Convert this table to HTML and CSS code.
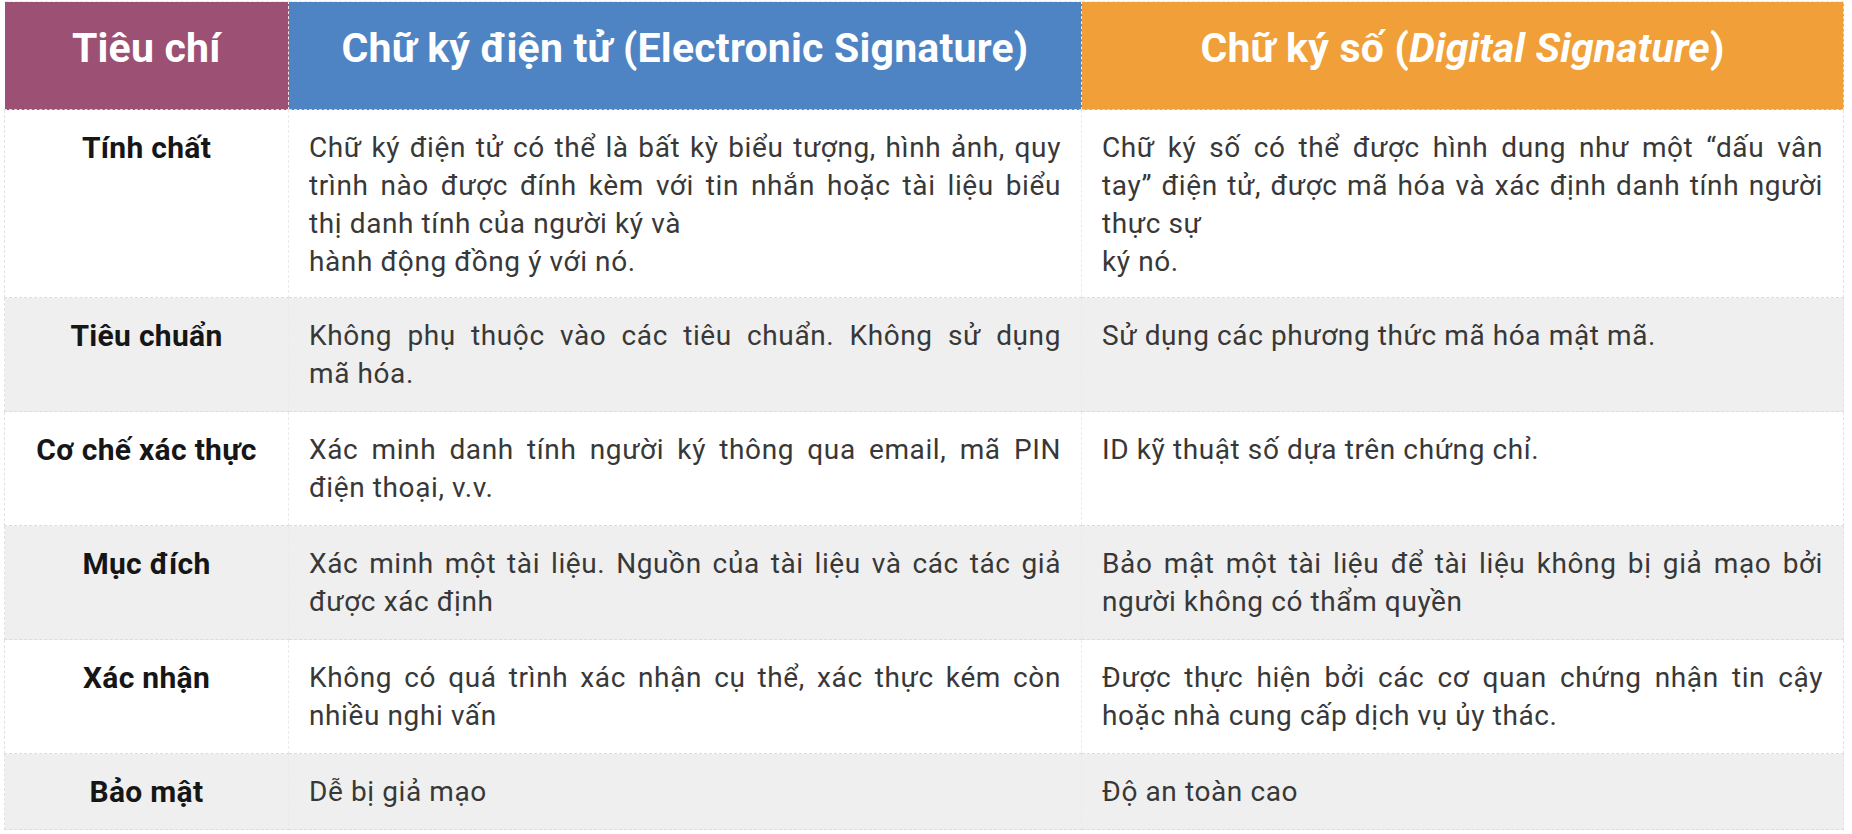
FILE: index.html
```html
<!DOCTYPE html>
<html lang="vi">
<head>
<meta charset="utf-8">
<title>Chữ ký điện tử và Chữ ký số</title>
<link rel="stylesheet" href="styles.css">
</head>
<body>
<table class="compare">
  <colgroup>
    <col class="c-crit">
    <col class="c-elec">
    <col class="c-dig">
  </colgroup>
  <thead>
    <tr>
      <th class="h-crit">Tiêu chí</th>
      <th class="h-elec">Chữ ký điện tử (Electronic Signature)</th>
      <th class="h-dig">Chữ ký số (<i>Digital Signature</i>)</th>
    </tr>
  </thead>
  <tbody>
    <tr class="row-a">
      <th>Tính chất</th>
      <td>Chữ ký điện tử có thể là bất kỳ biểu tượng, hình ảnh, quy trình nào được đính kèm với tin nhắn hoặc tài liệu biểu thị&nbsp;danh tính của người ký và<br>hành động đồng ý với nó.</td>
      <td>Chữ ký số có thể được hình dung như một “dấu vân tay”&nbsp;điện tử, được mã hóa và xác định danh tính người thực&nbsp;sự<br>ký nó.</td>
    </tr>
    <tr class="row-b">
      <th>Tiêu chuẩn</th>
      <td>Không phụ thuộc vào các tiêu chuẩn. Không sử dụng mã&nbsp;hóa.</td>
      <td>Sử dụng các phương thức mã hóa mật mã.</td>
    </tr>
    <tr class="row-a">
      <th>Cơ chế xác thực</th>
      <td>Xác minh danh tính người ký thông qua email, mã PIN điện thoại, v.v.</td>
      <td>ID kỹ thuật số dựa trên chứng chỉ.</td>
    </tr>
    <tr class="row-b">
      <th>Mục đích</th>
      <td>Xác minh một tài liệu. Nguồn của tài liệu và các tác giả được xác định</td>
      <td>Bảo mật một tài liệu để tài liệu không bị giả mạo bởi người không có thẩm quyền</td>
    </tr>
    <tr class="row-a">
      <th>Xác nhận</th>
      <td>Không có quá trình xác nhận cụ thể, xác thực kém còn nhiều nghi vấn</td>
      <td>Được thực hiện bởi các cơ quan chứng nhận tin cậy hoặc nhà cung cấp dịch vụ ủy thác.</td>
    </tr>
    <tr class="row-b">
      <th>Bảo mật</th>
      <td>Dễ bị giả mạo</td>
      <td>Độ an toàn cao</td>
    </tr>
  </tbody>
</table>
</body>
</html>
```
FILE: styles.css
```css
html, body {
  margin: 0;
  padding: 0;
  background: #ffffff;
}

body {
  padding: 1px 0 0 4px;
  font-family: Roboto, "Noto Sans", "Liberation Sans", sans-serif;
}

.compare {
  border-collapse: collapse;
  table-layout: fixed;
  width: 1839px;
}

.c-crit { width: 284px; }
.c-elec { width: 793px; }
.c-dig  { width: 762px; }

.compare thead th {
  height: 91px;
  padding: 0 10px 16px;
  color: #ffffff;
  font-size: 41px;
  font-weight: 700;
  letter-spacing: 0.2px;
  text-align: center;
  vertical-align: middle;
  border-bottom: 1px dashed #d9d9d9;
  border-top: 1px dashed #e8e8e8;
}

.compare thead th i {
  font-style: italic;
}

.h-crit {
  background: #9b5074;
  border-right: 1px dashed #ececec;
}

.h-elec {
  background: #4f84c4;
  border-right: 1px dashed #ececec;
}

.h-dig {
  background: #f09f39;
  border-right: 1px dashed #e2e2e2;
}

.compare tbody th,
.compare tbody td {
  padding: 19px 20px 18px;
  vertical-align: top;
  line-height: 38px;
  border-bottom: 1px dashed #dcdcdc;
}

.compare tbody .row-a:first-child th,
.compare tbody .row-a:first-child td {
  padding-bottom: 16px;
}

.compare tbody th {
  color: #161616;
  font-size: 30px;
  letter-spacing: 0.3px;
  font-weight: 700;
  text-align: center;
  border-left: 1px dashed #e2e2e2;
  border-right: 1px dashed #eaeaea;
}

.compare tbody td {
  color: #383838;
  font-size: 28px;
  letter-spacing: 0.6px;
  font-weight: 400;
  text-align: justify;
}

.compare tbody td + td {
  border-left: 1px dashed #eaeaea;
  border-right: 1px dashed #e2e2e2;
}

.row-a th, .row-a td { background: #ffffff; }
.row-b th, .row-b td { background: #efefef; }
```
